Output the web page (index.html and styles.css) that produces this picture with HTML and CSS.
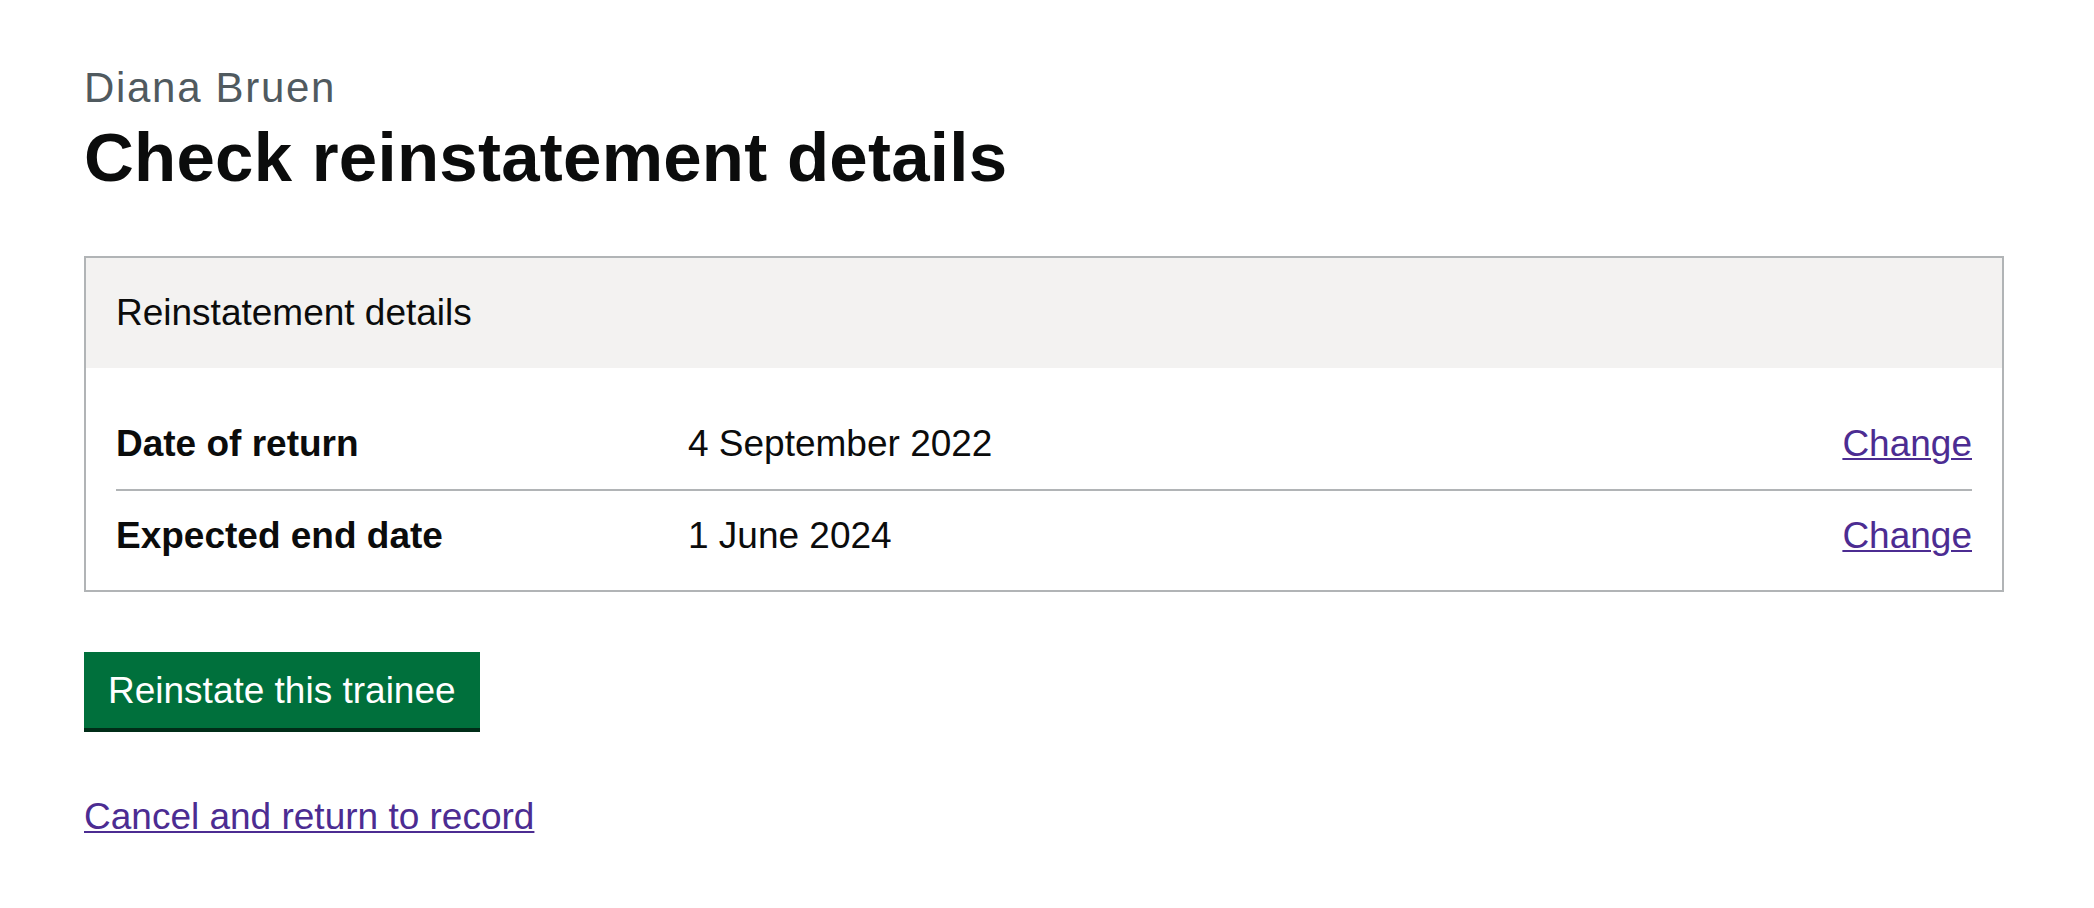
FILE: index.html
```html
<!DOCTYPE html>
<html lang="en">
<head>
<meta charset="utf-8">
<title>Check reinstatement details</title>
<link rel="stylesheet" href="styles.css">
</head>
<body>
<main class="page">
  <span class="caption">Diana Bruen</span>
  <h1 class="heading">Check reinstatement details</h1>

  <section class="card">
    <div class="card-header">Reinstatement details</div>
    <dl class="summary">
      <div class="summary-row">
        <dt class="summary-key">Date of return</dt>
        <dd class="summary-value">4 September 2022</dd>
        <dd class="summary-actions"><a class="link" href="#">Change</a></dd>
      </div>
      <div class="summary-row">
        <dt class="summary-key">Expected end date</dt>
        <dd class="summary-value">1 June 2024</dd>
        <dd class="summary-actions"><a class="link" href="#">Change</a></dd>
      </div>
    </dl>
  </section>

  <button class="button" type="button">Reinstate this trainee</button>

  <a class="link cancel" href="#">Cancel and return to record</a>
</main>
</body>
</html>
```

FILE: styles.css
```css
html, body {
  margin: 0;
  padding: 0;
  background: #ffffff;
}

body {
  font-family: "Liberation Sans", Arial, sans-serif;
  color: #0b0c0c;
  font-size: 37px;
  line-height: 50px;
}

.page {
  width: 1920px;
  padding: 63px 0 0 84px;
  display: flex;
  flex-direction: column;
  align-items: flex-start;
}

.caption {
  display: block;
  font-size: 42px;
  line-height: 50px;
  letter-spacing: 1.7px;
  color: #505a5f;
  margin-bottom: 5px;
}

.heading {
  margin: 0 0 58px 0;
  font-size: 69px;
  line-height: 80px;
  font-weight: 700;
  letter-spacing: 0.25px;
}

.card {
  width: 1920px;
  box-sizing: border-box;
  border: 2px solid #b1b4b6;
  margin-bottom: 60px;
}

.card-header {
  background: #f3f2f1;
  padding: 30px 30px;
  line-height: 50px;
}

.summary {
  margin: 0;
  padding: 31px 30px 9px 30px;
}

.summary-row {
  display: grid;
  grid-template-columns: 572px 1fr auto;
  padding: 20px 0;
  border-bottom: 2px solid #b1b4b6;
}

.summary-row:last-child {
  border-bottom: none;
}

.summary-key {
  font-weight: 700;
  margin: 0;
}

.summary-value {
  margin: 0;
}

.summary-actions {
  margin: 0;
  text-align: right;
}

.link {
  color: #4c2c92;
  text-decoration: underline;
  text-decoration-thickness: 2px;
  text-underline-offset: 2px;
}

.button {
  font-family: "Liberation Sans", Arial, sans-serif;
  font-size: 37px;
  line-height: 38px;
  color: #ffffff;
  background: #00703c;
  border: none;
  border-radius: 0;
  padding: 20px 24px 18px 24px;
  box-shadow: 0 4px 0 #002d18;
  margin: 0 0 64px 0;
  cursor: pointer;
}

.cancel {
  display: block;
  line-height: 50px;
}
```
